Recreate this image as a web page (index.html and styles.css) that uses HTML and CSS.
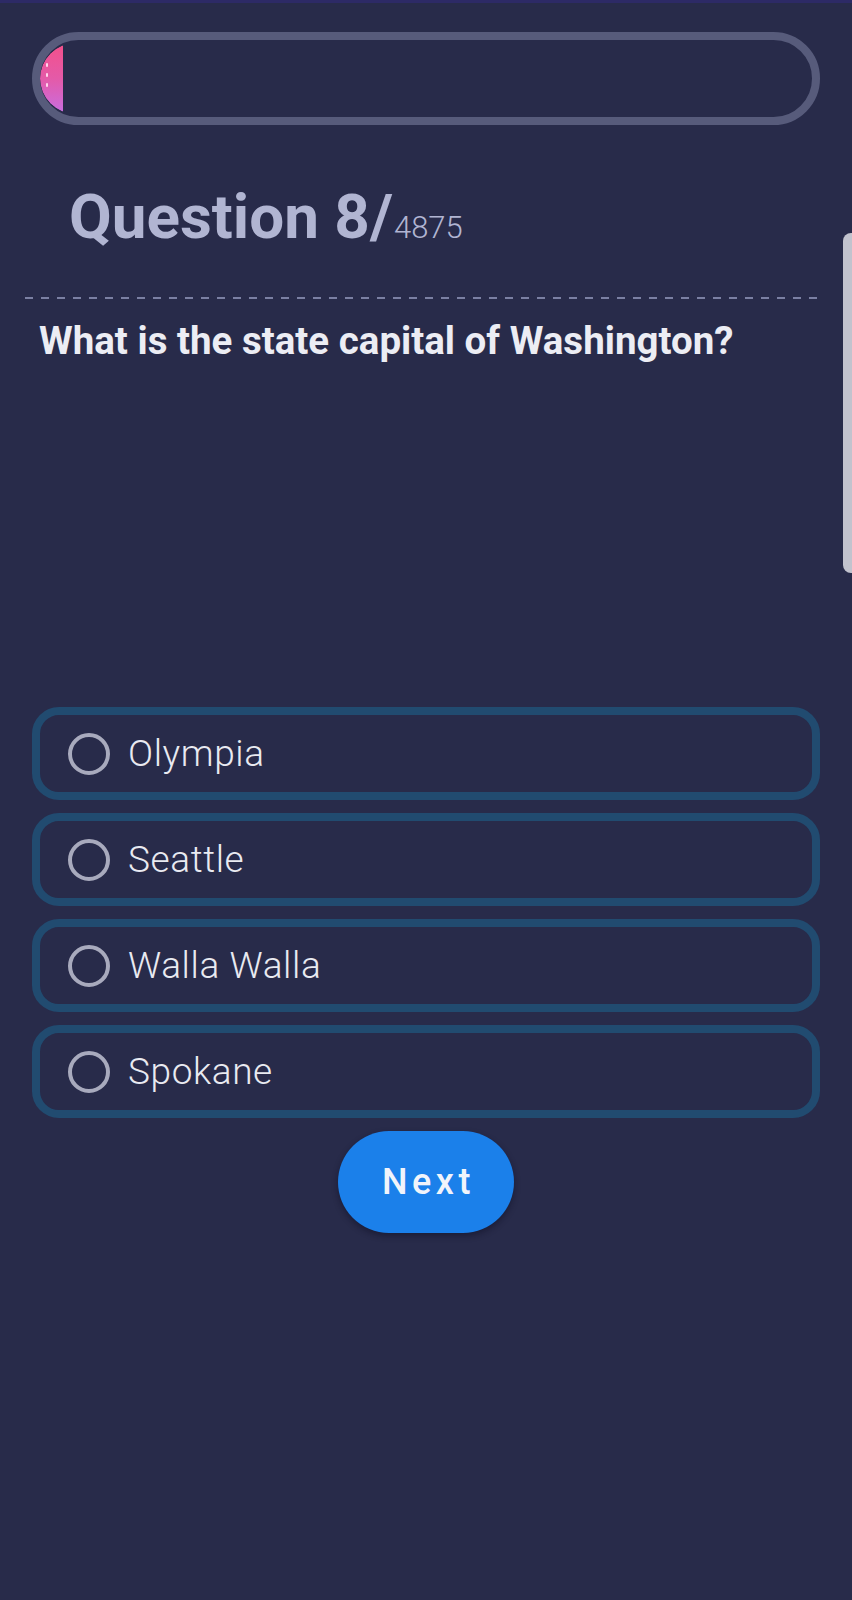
FILE: index.html
```html
<!DOCTYPE html>
<html lang="en">
<head>
<meta charset="utf-8">
<title>Quiz</title>
<link rel="stylesheet" href="styles.css">
</head>
<body>
<div class="topstripe"></div>
<main class="page">
  <div class="progress">
    <div class="progress-inner">
      <div class="fill-clip" style="width:23px">
        <div class="fill">
          <span class="tick"></span><span class="tick"></span><span class="tick"></span>
        </div>
      </div>
    </div>
  </div>

  <h1 class="qhead">Question 8/<span class="total">4875</span></h1>
  <div class="divider"></div>
  <p class="question">What is the state capital of Washington?</p>

  <div class="options">
    <label class="option"><span class="radio"></span><span class="opt-text">Olympia</span></label>
    <label class="option"><span class="radio"></span><span class="opt-text">Seattle</span></label>
    <label class="option"><span class="radio"></span><span class="opt-text">Walla Walla</span></label>
    <label class="option"><span class="radio"></span><span class="opt-text">Spokane</span></label>
  </div>

  <div class="actions">
    <button class="next">Next</button>
  </div>
</main>
<div class="scrollbar"></div>
</body>
</html>
```

FILE: styles.css
```css
html, body {
  margin: 0;
  padding: 0;
}
body {
  background: #282b4a;
  font-family: Roboto, "Noto Sans", "Liberation Sans", sans-serif;
  min-height: 1600px;
  position: relative;
  overflow: hidden;
}
.topstripe {
  height: 3px;
  background: #2d2a66;
}
.page {
  margin: 0 32px;
  display: flex;
  flex-direction: column;
}
.progress {
  margin-top: 29px;
  height: 93px;
  box-sizing: border-box;
  border: 8px solid #575b7b;
  border-radius: 47px;
  padding: 3px 0;
}
.progress-inner {
  height: 100%;
  border-radius: 38px;
  overflow: hidden;
  display: flex;
}
.fill-clip {
  height: 100%;
  overflow: hidden;
  flex: none;
}
.fill {
  width: 200px;
  height: 100%;
  border-radius: 36px 0 0 36px;
  background: linear-gradient(180deg, #f4508a 0%, #e45aa8 50%, #c86ee2 100%);
  position: relative;
}
.tick {
  position: absolute;
  left: 6px;
  width: 2px;
  height: 4px;
  background: #ffd6ec;
  border-radius: 1px;
}
.tick:nth-child(1) { top: 20px; }
.tick:nth-child(2) { top: 30px; }
.tick:nth-child(3) { top: 40px; }

.qhead {
  margin: 61px 0 0 37px;
  font-size: 62px;
  line-height: 62px;
  height: 62px;
  font-weight: 700;
  color: #b1b5d2;
  letter-spacing: 0;
}
.total {
  font-size: 31px;
  font-weight: 300;
  margin-left: 1px;
}
.divider {
  margin: 49px -1px 0 -7px;
  height: 2px;
  background: repeating-linear-gradient(90deg, #7b80a3 0 8px, transparent 8px 16px);
}
.question {
  margin: 23px 0 0 7px;
  font-size: 38.5px;
  line-height: 38px;
  font-weight: 700;
  color: #ecedf4;
}
.options {
  margin-top: 347px;
  display: flex;
  flex-direction: column;
  gap: 13px;
}
.option {
  height: 93px;
  box-sizing: border-box;
  border: 8px solid #214b70;
  border-radius: 27px;
  display: flex;
  align-items: center;
  padding-left: 28px;
  gap: 18px;
}
.radio {
  width: 42px;
  height: 42px;
  box-sizing: border-box;
  border: 4px solid #a8aabd;
  border-radius: 50%;
  flex: none;
}
.opt-text {
  font-size: 37px;
  font-weight: 300;
  letter-spacing: 0.6px;
  color: #e9eaf1;
  line-height: 1;
}
.actions {
  display: flex;
  justify-content: center;
  margin-top: 13px;
}
.next {
  width: 176px;
  height: 102px;
  border: none;
  border-radius: 51px;
  background: #1b80ea;
  color: #f1f4fb;
  font-family: Roboto, "Noto Sans", sans-serif;
  font-size: 36px;
  font-weight: 500;
  letter-spacing: 4.5px;
  padding: 0 0 0 5px;
  box-shadow: 0 3px 6px rgba(10, 12, 30, 0.45);
}
.scrollbar {
  position: absolute;
  right: 0;
  top: 233px;
  width: 9px;
  height: 340px;
  background: #c2c3ce;
  border-radius: 8px 0 0 8px;
}
```
